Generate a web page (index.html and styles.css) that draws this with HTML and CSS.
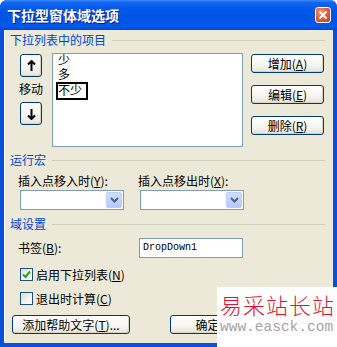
FILE: index.html
```html
<!DOCTYPE html>
<html lang="zh-CN">
<head>
<meta charset="utf-8">
<title>下拉型窗体域选项</title>
<link rel="stylesheet" href="styles.css">
</head>
<body>
<div class="window">
  <div class="titlebar">
    <span class="title">下拉型窗体域选项</span>
    <span class="close"><svg width="8" height="8" viewBox="0 0 8 8"><path d="M1 1L7 7M7 1L1 7" stroke="#fff" stroke-width="2" stroke-linecap="square"/></svg></span>
  </div>
  <div class="client">
    <div class="group-head g1"><span>下拉列表中的项目</span><i class="rule"></i></div>
    <div class="items-row">
      <div class="move-col">
        <div class="btn arrow"><svg width="9" height="12" viewBox="0 0 9 12"><path d="M4.5 1V11M1 4.5L4.5 1L8 4.5" fill="none" stroke="#000" stroke-width="2"/></svg></div>
        <div class="move-label">移动</div>
        <div class="btn arrow"><svg width="9" height="12" viewBox="0 0 9 12"><path d="M4.5 1V11M1 7.5L4.5 11L8 7.5" fill="none" stroke="#000" stroke-width="2"/></svg></div>
      </div>
      <div class="listbox">
        <div class="item">少</div>
        <div class="item">多</div>
        <div class="item"><span class="focus">不少</span></div>
      </div>
      <div class="side-col">
        <div class="btn side">增加(<u>A</u>)</div>
        <div class="btn side">编辑(<u>E</u>)</div>
        <div class="btn side">删除(<u>R</u>)</div>
      </div>
    </div>

    <div class="group-head g2"><span>运行宏</span><i class="rule"></i></div>
    <div class="macro-row">
      <div class="macro-col">
        <div class="label">插入点移入时(<u>Y</u>):</div>
        <div class="combo"><span class="drop"><svg width="9" height="6" viewBox="0 0 9 6"><path d="M1 1L4.5 4.5L8 1" fill="none" stroke="#4D6185" stroke-width="2"/></svg></span></div>
      </div>
      <div class="macro-col">
        <div class="label">插入点移出时(<u>X</u>):</div>
        <div class="combo"><span class="drop"><svg width="9" height="6" viewBox="0 0 9 6"><path d="M1 1L4.5 4.5L8 1" fill="none" stroke="#4D6185" stroke-width="2"/></svg></span></div>
      </div>
    </div>

    <div class="group-head g3"><span>域设置</span><i class="rule"></i></div>
    <div class="bookmark-row">
      <span class="label bm">书签(<u>B</u>):</span>
      <span class="textbox">DropDown1</span>
    </div>
    <div class="check-row c1">
      <span class="check on"><svg width="9" height="9" viewBox="0 0 9 9"><path d="M1 4.5L3.5 7L8 1.5" fill="none" stroke="#21A121" stroke-width="2"/></svg></span>
      <span>启用下拉列表(<u>N</u>)</span>
    </div>
    <div class="check-row c2">
      <span class="check"></span>
      <span>退出时计算(<u>C</u>)</span>
    </div>
    <div class="button-row">
      <div class="btn help">添加帮助文字(<u>T</u>)...</div>
      <div class="btn ok">确定</div>
    </div>
  </div>
  <div class="watermark">
    <div class="wm-cn">易采站长站</div>
    <div class="wm-en">www.easck.com</div>
  </div>
</div>
</body>
</html>
```

FILE: styles.css
```css
* { box-sizing: border-box; }
html, body { margin: 0; padding: 0; background: #fff; }
body {
  width: 337px;
  height: 347px;
  overflow: hidden;
  font-family: "Noto Sans CJK SC", "Noto Sans", sans-serif;
  font-size: 12px;
  color: #000;
}
u { text-decoration: underline; }

.window {
  position: relative;
  width: 337px;
  height: 347px;
  background: #0A50D8;
  border-radius: 7px 7px 0 0;
  display: flex;
  flex-direction: column;
  overflow: hidden;
}

.titlebar {
  height: 30px;
  flex: none;
  display: flex;
  align-items: center;
  justify-content: space-between;
  padding: 0 6px 0 7px;
  background: linear-gradient(#3D8BFF 0%, #1466F0 8%, #0058E8 30%, #0054E3 60%, #0058EE 88%, #0347C8 100%);
}
.title {
  color: #fff;
  font-weight: bold;
  font-size: 14px;
  line-height: 16px;
  text-shadow: 1px 1px 0 #0A1E8A;
}
.close {
  width: 16px;
  height: 16px;
  border: 1px solid #fff;
  border-radius: 3px;
  background: radial-gradient(circle at 35% 30%, #F09A7A 0%, #E0603A 45%, #C8401E 100%);
  display: flex;
  align-items: center;
  justify-content: center;
}

.client {
  flex: 1;
  margin: 0 4px 4px 4px;
  background: #ECE9D8;
  box-shadow: inset 1px 0 0 #fff;
  display: flex;
  flex-direction: column;
}

.group-head {
  display: flex;
  align-items: center;
  height: 14px;
  line-height: 14px;
  padding-left: 6px;
  padding-right: 8px;
  color: #0046D5;
}
.group-head .rule {
  flex: 1;
  height: 1px;
  margin-left: 6px;
  background: #D0D0BF;
}
.g1 { margin-top: 3px; }
.g2 { margin-top: 6px; }
.g3 { margin-top: 7px; }

.items-row {
  display: flex;
  margin-top: 6px;
  padding-left: 16px;
}
.move-col {
  width: 22px;
  display: flex;
  flex-direction: column;
  align-items: center;
  padding-top: 1px;
}
.btn {
  border: 1px solid #003C74;
  border-radius: 3px;
  background: linear-gradient(#FFFFFF 0%, #F6F5F0 60%, #E6E3D8 100%);
  box-shadow: inset -1px -1px 0 #D8D2C2;
  display: flex;
  align-items: center;
  justify-content: center;
  line-height: 14px;
  white-space: nowrap;
}
.arrow { width: 22px; height: 23px; }
.move-label {
  margin-top: 5px;
  margin-bottom: 7px;
  line-height: 13px;
  width: 30px;
  text-align: center;
}

.listbox {
  width: 191px;
  height: 94px;
  margin-left: 10px;
  background: #fff;
  border: 1px solid #7F9DB9;
  padding: 0 0 0 5px;
  font-family: "Liberation Sans", "Noto Sans CJK SC", sans-serif;
  font-size: 12px;
}
.item { height: 14px; line-height: 14px; }
.focus {
  display: inline-block;
  border: 2px solid #000;
  margin-left: -2px;
  padding: 1px 4px 0 0;
  line-height: 13px;
}

.side-col {
  margin-left: 8px;
  padding-top: 1px;
  display: flex;
  flex-direction: column;
  gap: 12px;
}
.side { width: 73px; height: 19px; }

.macro-row {
  display: flex;
  margin-top: 7px;
  padding-left: 14px;
}
.macro-col { width: 119px; display: flex; flex-direction: column; }
.macro-col + .macro-col { margin-left: 1px; }
.label { line-height: 14px; white-space: nowrap; }
.combo {
  margin-top: 2px;
  margin-left: 2px;
  width: 104px;
  height: 20px;
  background: #fff;
  border: 1px solid #7F9DB9;
  display: flex;
  justify-content: flex-end;
  padding: 1px;
}
.drop {
  width: 16px;
  height: 16px;
  border-radius: 2px;
  border: 1px solid #B9CDF8;
  background: linear-gradient(#D0DEFE, #B4CAFA);
  display: flex;
  align-items: center;
  justify-content: center;
}

.bookmark-row {
  display: flex;
  align-items: center;
  margin-top: 7px;
  padding-left: 14px;
}
.bm { width: 121px; }
.textbox {
  width: 104px;
  height: 20px;
  background: #fff;
  border: 1px solid #7F9DB9;
  padding-left: 3px;
  font-family: "Liberation Mono", "DejaVu Sans Mono", monospace;
  font-size: 10px;
  line-height: 18px;
}

.check-row {
  display: flex;
  align-items: center;
  padding-left: 16px;
  height: 13px;
  line-height: 13px;
  gap: 3px;
}
.c1 { margin-top: 10px; }
.c2 { margin-top: 11px; }
.check {
  width: 13px;
  height: 13px;
  border: 1px solid #1C5180;
  background: linear-gradient(135deg, #DCDCD7 0%, #F4F4F0 60%, #FFFFFF 100%);
  display: flex;
  align-items: center;
  justify-content: center;
}

.button-row {
  display: flex;
  margin-top: 10px;
  padding-left: 8px;
}
.help { width: 118px; height: 19px; }
.ok { width: 75px; height: 19px; margin-left: 40px; }

.watermark {
  position: absolute;
  left: 217px;
  top: 287px;
  width: 120px;
  height: 60px;
  background: #fff;
  padding: 4px 0 0 3px;
}
.wm-cn {
  color: #E8102A;
  font-size: 22px;
  line-height: 26px;
  font-weight: 300;
  letter-spacing: 1px;
  white-space: nowrap;
}
.wm-en {
  margin-top: 2px;
  color: #A8A0A8;
  font-family: "Liberation Mono", "DejaVu Sans Mono", monospace;
  font-size: 14.5px;
  line-height: 16px;
  white-space: nowrap;
}
```
